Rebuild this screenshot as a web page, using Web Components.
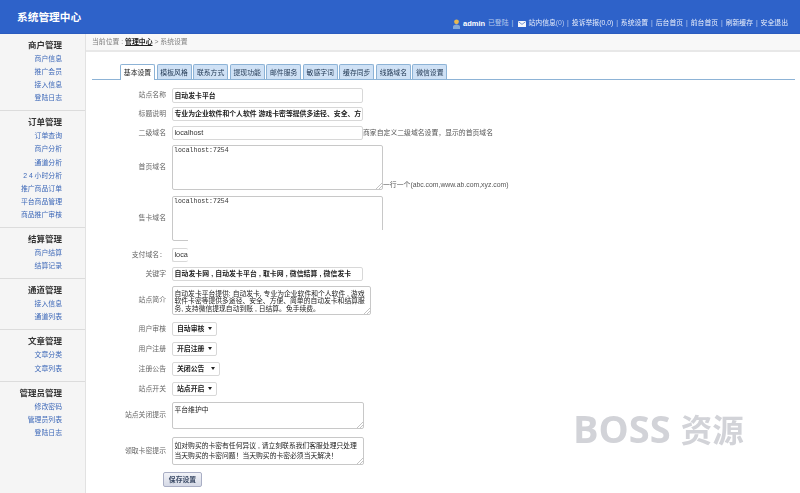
<!DOCTYPE html>
<html lang="zh">
<head>
<meta charset="utf-8">
<title>系统管理中心</title>
<style>
html, body { margin: 0; height: 100%; background: #fff; }
body { overflow: hidden; font: 6.85px/1.2 "Liberation Sans", "Noto Sans CJK SC", sans-serif; color: #333; }
</style>
</head>
<body>
<admin-page>
  <top-bar slot="top" title="系统管理中心"></top-bar>
  <side-menu slot="side">
    <menu-group title="商户管理"><a>商户信息</a><a>推广会员</a><a>接入信息</a><a>登陆日志</a></menu-group>
    <menu-group title="订单管理"><a>订单查询</a><a>商户分析</a><a>通道分析</a><a>2 4 小时分析</a><a>推广商品订单</a><a>平台商品管理</a><a>商品推广审核</a></menu-group>
    <menu-group title="结算管理"><a>商户结算</a><a>结算记录</a></menu-group>
    <menu-group title="通道管理"><a>接入信息</a><a>通道列表</a></menu-group>
    <menu-group title="文章管理"><a>文章分类</a><a>文章列表</a></menu-group>
    <menu-group title="管理员管理" last><a>修改密码</a><a>管理员列表</a><a>登陆日志</a></menu-group>
  </side-menu>
  <bread-crumb slot="main"></bread-crumb>
  <tab-bar slot="main" tabs="基本设置,模板风格,联系方式,提现功能,邮件服务,敏感字词,缓存同步,线路域名,微信设置"></tab-bar>
  <settings-form slot="main">
    <form-row label="站点名称" style="margin-top:8px"><field-box w="191" h="15" strong>自动发卡平台</field-box></form-row>
    <form-row label="标题说明" style="margin-top:4px"><field-box w="191" h="14" strong>专业为企业软件和个人软件 游戏卡密等提供多途径、安全、方</field-box></form-row>
    <form-row label="二级域名" style="margin-top:5px"><field-box w="191" h="14" latin>localhost</field-box><span class="hint">商家自定义二级域名设置，显示的首页域名</span></form-row>
    <form-row label="首页域名" style="margin-top:5px"><field-box w="211" h="45" area mono>localhost:7254</field-box><span class="hint bottom">一行一个(abc.com,www.ab.com,xyz.com)</span></form-row>
    <form-row label="售卡域名" style="margin-top:6px"><field-box w="211" h="45" area mono>localhost:7254</field-box></form-row>
    <form-row label="支付域名：" style="margin-top:7px"><field-box w="16" h="14" latin open>loca</field-box><wipe-patch></wipe-patch></form-row>
    <form-row label="关键字" style="margin-top:5px"><field-box w="191" h="14" strong style="letter-spacing:.1px">自动发卡网 , 自动发卡平台 , 取卡网 , 微信结算 , 微信发卡</field-box></form-row>
    <form-row label="站点简介" style="margin-top:5px"><field-box w="199" h="29" area grip>自动发卡平台提供: 自动发卡, 专业为企业软件和个人软件 , 游戏<br>软件卡密等提供多途径、安全、方便、简单的自动发卡和结算服<br>务, 支持微信提现自动到账 , 日结算。免手续费。</field-box></form-row>
    <form-row label="用户审核" style="margin-top:7px"><field-box w="45" h="14" strong select>自动审核</field-box></form-row>
    <form-row label="用户注册" style="margin-top:6px"><field-box w="45" h="14" strong select>开启注册</field-box></form-row>
    <form-row label="注册公告" style="margin-top:6px"><field-box w="48" h="14" strong select>关闭公告</field-box></form-row>
    <form-row label="站点开关" style="margin-top:6px"><field-box w="45" h="14" strong select>站点开启</field-box></form-row>
    <form-row label="站点关闭提示" style="margin-top:6px"><field-box w="192" h="27" area grip>平台维护中</field-box></form-row>
    <form-row label="领取卡密提示" style="margin-top:8px"><field-box w="192" h="28" area grip style="line-height:10px">如对购买的卡密有任何异议 , 请立刻联系我们客服处理只处理<br>当天购买的卡密问题！当天购买的卡密必须当天解决！</field-box></form-row>
    <save-button style="margin-top:7px">保存设置</save-button>
  </settings-form>
</admin-page>
<boss-mark></boss-mark>

<script>
"use strict";

// small helper, every element here is only a shadow root with some html
function shadow(el, html) {
    let tmpl = document.createElement('template');
    tmpl.innerHTML = html;
    el.attachShadow({mode: 'open'});
    el.shadowRoot.append(tmpl.content.cloneNode(true));
}

class AdminPage extends HTMLElement {
    constructor() {
        super();
        shadow(this, `<style>
:host { display: block; width: 800px; height: 493px; filter: blur(.35px); }
.body { display: flex; height: 459px; }
.side { display: block; width: 86px; flex: none; }
.main { display: block; flex: 1; min-width: 0; }
</style>
<slot name="top"></slot>
<div class="body">
  <div class="side"><slot name="side"></slot></div>
  <div class="main"><slot name="main"></slot></div>
</div>`);
    }
}

class TopBar extends HTMLElement {
    constructor() {
        super();
        let links = ['投诉举报(0,0)', '系统设置', '后台首页', '前台首页', '刷新缓存', '安全退出'];
        shadow(this, `<style>
:host { display: flex; align-items: center; justify-content: space-between; height: 34px; box-sizing: border-box;
    padding: 0 12px 0 17px; background: #2e62c9; color: #fff; border-bottom: 1px solid #2b5cbf; }
h1 { margin: 2px 0 0; font-size: 10.7px; font-weight: bold; }
nav { display: flex; align-items: center; gap: 2.9px; font-size: 6.85px; margin-top: 14px; color: #e8eefb; white-space: nowrap; }
b { color: #fff; font-size: 7.5px; }
.dim { color: #b9cbee; }
.sep { color: #b9cbee; }
svg { display: block; }
</style>
<h1>${this.getAttribute('title')}</h1>
<nav>
  <svg width="7" height="10" viewBox="0 0 7 10"><circle cx="3.5" cy="2.8" r="2.4" fill="#e8b850"/><path d="M0 10V7.6C0 6.4 1.6 5.4 3.5 5.4S7 6.4 7 7.6V10z" fill="#7fa6dc"/></svg>
  <b>admin</b><span class="dim">已登陆</span><span class="sep">|</span>
  <svg style="margin-left:1.5px" width="8" height="6" viewBox="0 0 8 6"><rect width="8" height="6" fill="#f4f6fb"/><path d="M.4.7 4 3.4 7.6.7" fill="none" stroke="#5a7fc8" stroke-width=".8"/></svg>
  <span>站内信息<span class="dim">(0)</span></span>
  ${links.map(l => `<span class="sep">|</span><span>${l}</span>`).join('')}
</nav>`);
    }
}

class SideMenu extends HTMLElement {
    constructor() {
        super();
        shadow(this, `<style>
:host { display: block; height: 459px; box-sizing: border-box; background: #f5f5f5; border-right: 1px solid #e2e2e2; }
</style><slot></slot>`);
    }
}

class MenuGroup extends HTMLElement {
    constructor() {
        super();
        shadow(this, `<style>
:host { display: block; box-sizing: border-box; padding: 5px 23px 6px 0; text-align: right; border-bottom: 1px solid #dcdcdc; }
:host([last]) { border-bottom: 0; }
h2 { margin: 0; height: 13px; line-height: 13px; font-size: 8.5px; font-weight: bold; color: #333; }
::slotted(a) { display: block; height: 13.1px; line-height: 13.1px; color: #3d68b8; white-space: nowrap; }
</style><h2>${this.getAttribute('title')}</h2><slot></slot>`);
    }
}

class BreadCrumb extends HTMLElement {
    constructor() {
        super();
        shadow(this, `<style>
:host { display: block; height: 18px; box-sizing: border-box; padding-left: 6px; line-height: 16px; background: #f8f8f8;
    border-bottom: 2px solid #e8e8e8; color: #808080; }
a { color: #222; font-weight: bold; text-decoration: underline; }
</style>当前位置 : <a>管理中心</a> &gt; 系统设置`);
    }
}

class TabBar extends HTMLElement {
    constructor() {
        super();
        let tabs = this.getAttribute('tabs').split(',');
        shadow(this, `<style>
:host { display: flex; gap: 1.55px; height: 15px; margin: 12px 5px 0 6px; padding-left: 28px; border-bottom: 1px solid #8db3d6; }
span { width: 35px; height: 15px; box-sizing: border-box; text-align: center; line-height: 15px; color: #1f3550;
    background: #cfe1f5; border: 1px solid #8db3d6; border-bottom: 0; border-radius: 2px 2px 0 0; }
.on { background: #fff; color: #222; height: 16px; }
</style>${tabs.map((t, i) => `<span class="${i ? '' : 'on'}">${t}</span>`).join('')}`);
    }
}

class SettingsForm extends HTMLElement {
    constructor() {
        super();
        shadow(this, `<style>:host { display: block; }</style><slot></slot>`);
    }
}

class FormRow extends HTMLElement {
    constructor() {
        super();
        shadow(this, `<style>
:host { display: flex; align-items: center; position: relative; }
label { width: 80px; margin-right: 6px; flex: none; text-align: right; color: #666; white-space: nowrap; }
::slotted(.hint) { color: #555; white-space: nowrap; }
::slotted(.bottom) { align-self: flex-end; margin-bottom: 1px; }
</style><label>${this.getAttribute('label')}</label><slot></slot>`);
    }
}

class FieldBox extends HTMLElement {
    constructor() {
        super();
        let w = this.getAttribute('w'), h = this.getAttribute('h');
        let extra = '';
        if (this.hasAttribute('select')) extra = '<i class="arrow"></i>';
        if (this.hasAttribute('grip') || this.hasAttribute('mono')) {
            extra = '<svg class="grip" width="7" height="7" viewBox="0 0 7 7"><path d="M1 7 7 1M4 7 7 4" stroke="#aaa" stroke-width=".7"/></svg>';
        }
        shadow(this, `<style>
:host { display: block; position: relative; box-sizing: border-box; width: ${w}px; height: ${h}px; flex: none;
    padding: 0 1.5px; overflow: hidden; white-space: nowrap; line-height: ${h - 2}px; color: #333; background: #fff;
    border: 1px solid #d8d8d8; border-radius: 2px; }
:host([strong]) { font-weight: bold; color: #222; }
:host([latin]) { font-size: 7.3px; }
:host([select]) { padding-left: 4px; }
:host([area]) { font-size: 6.8px; line-height: 7.6px; padding: 2.5px 1.5px; border-color: #c8c8c8; color: #222; }
:host([mono]) { font-family: "Liberation Mono", monospace; font-size: 6.5px; padding: 1px 0 0 1px; color: #333; }
:host([open]) { border-right: 0; }
.arrow { position: absolute; right: 4px; top: 4px; border: 2px solid transparent; border-top: 3px solid #222; border-bottom: 0; }
.grip { position: absolute; right: 0; bottom: 0; }
</style><slot></slot>${extra}`);
    }
}

// the source shot has a wiped out strip around the payment domain row
class WipePatch extends HTMLElement {
    constructor() {
        super();
        shadow(this, `<style>
:host { position: absolute; left: 102px; top: -18px; width: 330px; height: 34px; background: #fff; }
</style>`);
    }
}

class SaveButton extends HTMLElement {
    constructor() {
        super();
        shadow(this, `<style>
:host { display: block; box-sizing: border-box; width: 39px; height: 15px; margin-left: 77px; text-align: center; line-height: 13px;
    font-weight: bold; color: #3b4a66; background: linear-gradient(#f2f3f8, #d5d9e6); border: 1px solid #a9aec4; border-radius: 2px; }
</style><slot></slot>`);
    }
}

class BossMark extends HTMLElement {
    constructor() {
        super();
        shadow(this, `<style>
:host { position: absolute; left: 573px; top: 406px; display: flex; align-items: center; gap: 10px; height: 44px; color: #d2d3d8; font-weight: bold; }
.en { font: bold 38px/44px "Open Sans", sans-serif; }
.zh { font: bold 31.5px/44px "Noto Sans CJK SC", sans-serif; }
</style><span class="en">BOSS</span><span class="zh">资源</span>`);
    }
}

customElements.define('admin-page', AdminPage);
customElements.define('top-bar', TopBar);
customElements.define('side-menu', SideMenu);
customElements.define('menu-group', MenuGroup);
customElements.define('bread-crumb', BreadCrumb);
customElements.define('tab-bar', TabBar);
customElements.define('settings-form', SettingsForm);
customElements.define('form-row', FormRow);
customElements.define('field-box', FieldBox);
customElements.define('wipe-patch', WipePatch);
customElements.define('save-button', SaveButton);
customElements.define('boss-mark', BossMark);
</script>
</body>
</html>
